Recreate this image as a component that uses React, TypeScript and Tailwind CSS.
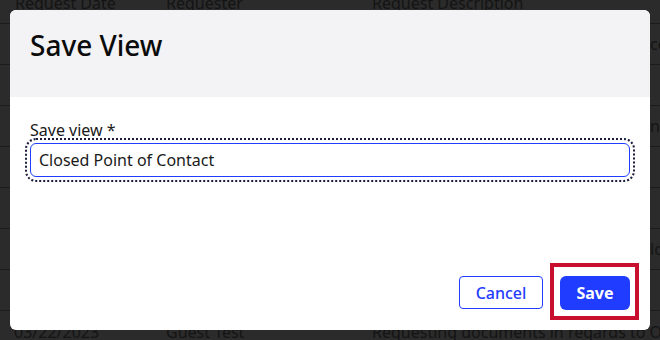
import { useState } from "react";

const edges = ["co", "", "ne", "", "", "lo", ""];

function BackgroundTable() {
  return (
    <div className="w-[660px] h-[340px] overflow-hidden bg-[#2b2b2b] text-[#141414] text-[16px] leading-6">
      {/* header row, scrolled partly out of view */}
      <div className="h-[24px] flex items-end border-b border-[#1c1c1c]">
        <div className="mb-[8px] pl-[15px] grid grid-cols-[151px_206px_1fr] w-full whitespace-nowrap">
          <span>Request Date</span>
          <span>Requester</span>
          <span>Request Description</span>
        </div>
      </div>
      {edges.map((e, i) => (
        <div key={i} className="h-[41px] flex items-center pl-[650px] border-b border-[#1c1c1c] whitespace-nowrap">
          {e}
        </div>
      ))}
      <div className="h-[41px] pt-[9px] pl-[14px] grid grid-cols-[152px_206px_1fr] whitespace-nowrap">
        <span>03/22/2023</span>
        <span>Guest Test</span>
        <span>Requesting documents in regards to Order</span>
      </div>
    </div>
  );
}

export default function App() {
  const [name, setName] = useState("Closed Point of Contact");

  return (
    <div className="relative w-[660px] h-[340px] overflow-hidden" style={{ fontFamily: '"Noto Sans", "Open Sans", sans-serif' }}>
      <BackgroundTable />

      {/* Modal */}
      <div className="absolute left-[10px] top-[10px] w-[640px] h-[320px] bg-white rounded-md overflow-hidden flex flex-col">
        <div className="h-[87px] bg-[#f3f3f5] px-5 pt-[17px]">
          <h2 className="text-[28px] leading-9 font-medium text-[#0b0b0b]">Save View</h2>
        </div>

        <div className="flex-1 flex flex-col px-5 pt-[23px] pb-5">
          <label className="text-[16px] leading-5 text-[#1a1a1a]">Save view *</label>
          <input
            value={name}
            onChange={(e) => setName(e.target.value)}
            className="mt-[3px] h-[34px] w-full rounded-md border-[1.5px] border-[#1f3cff] px-2 text-[16px] text-[#1a1a1a] outline-2 outline-dotted outline-offset-[3px] outline-[#1b1b3a]"
          />

          <div className="mt-auto flex justify-end gap-[17px]">
            <button className="w-[84px] h-[33px] rounded-[4px] border border-[#1f3cff] text-[#1f3cff] text-[16px] font-medium">
              Cancel
            </button>
            <div className="relative">
              <button className="w-[70px] h-[34px] rounded-md bg-[#1f3cff] text-white text-[16px] font-bold">
                Save
              </button>
              {/* highlight annotation */}
              <span className="absolute left-[-10px] right-[-9px] top-[-13px] bottom-[-10px] border-4 border-[#c8102e] pointer-events-none" />
            </div>
          </div>
        </div>
      </div>
    </div>
  );
}
